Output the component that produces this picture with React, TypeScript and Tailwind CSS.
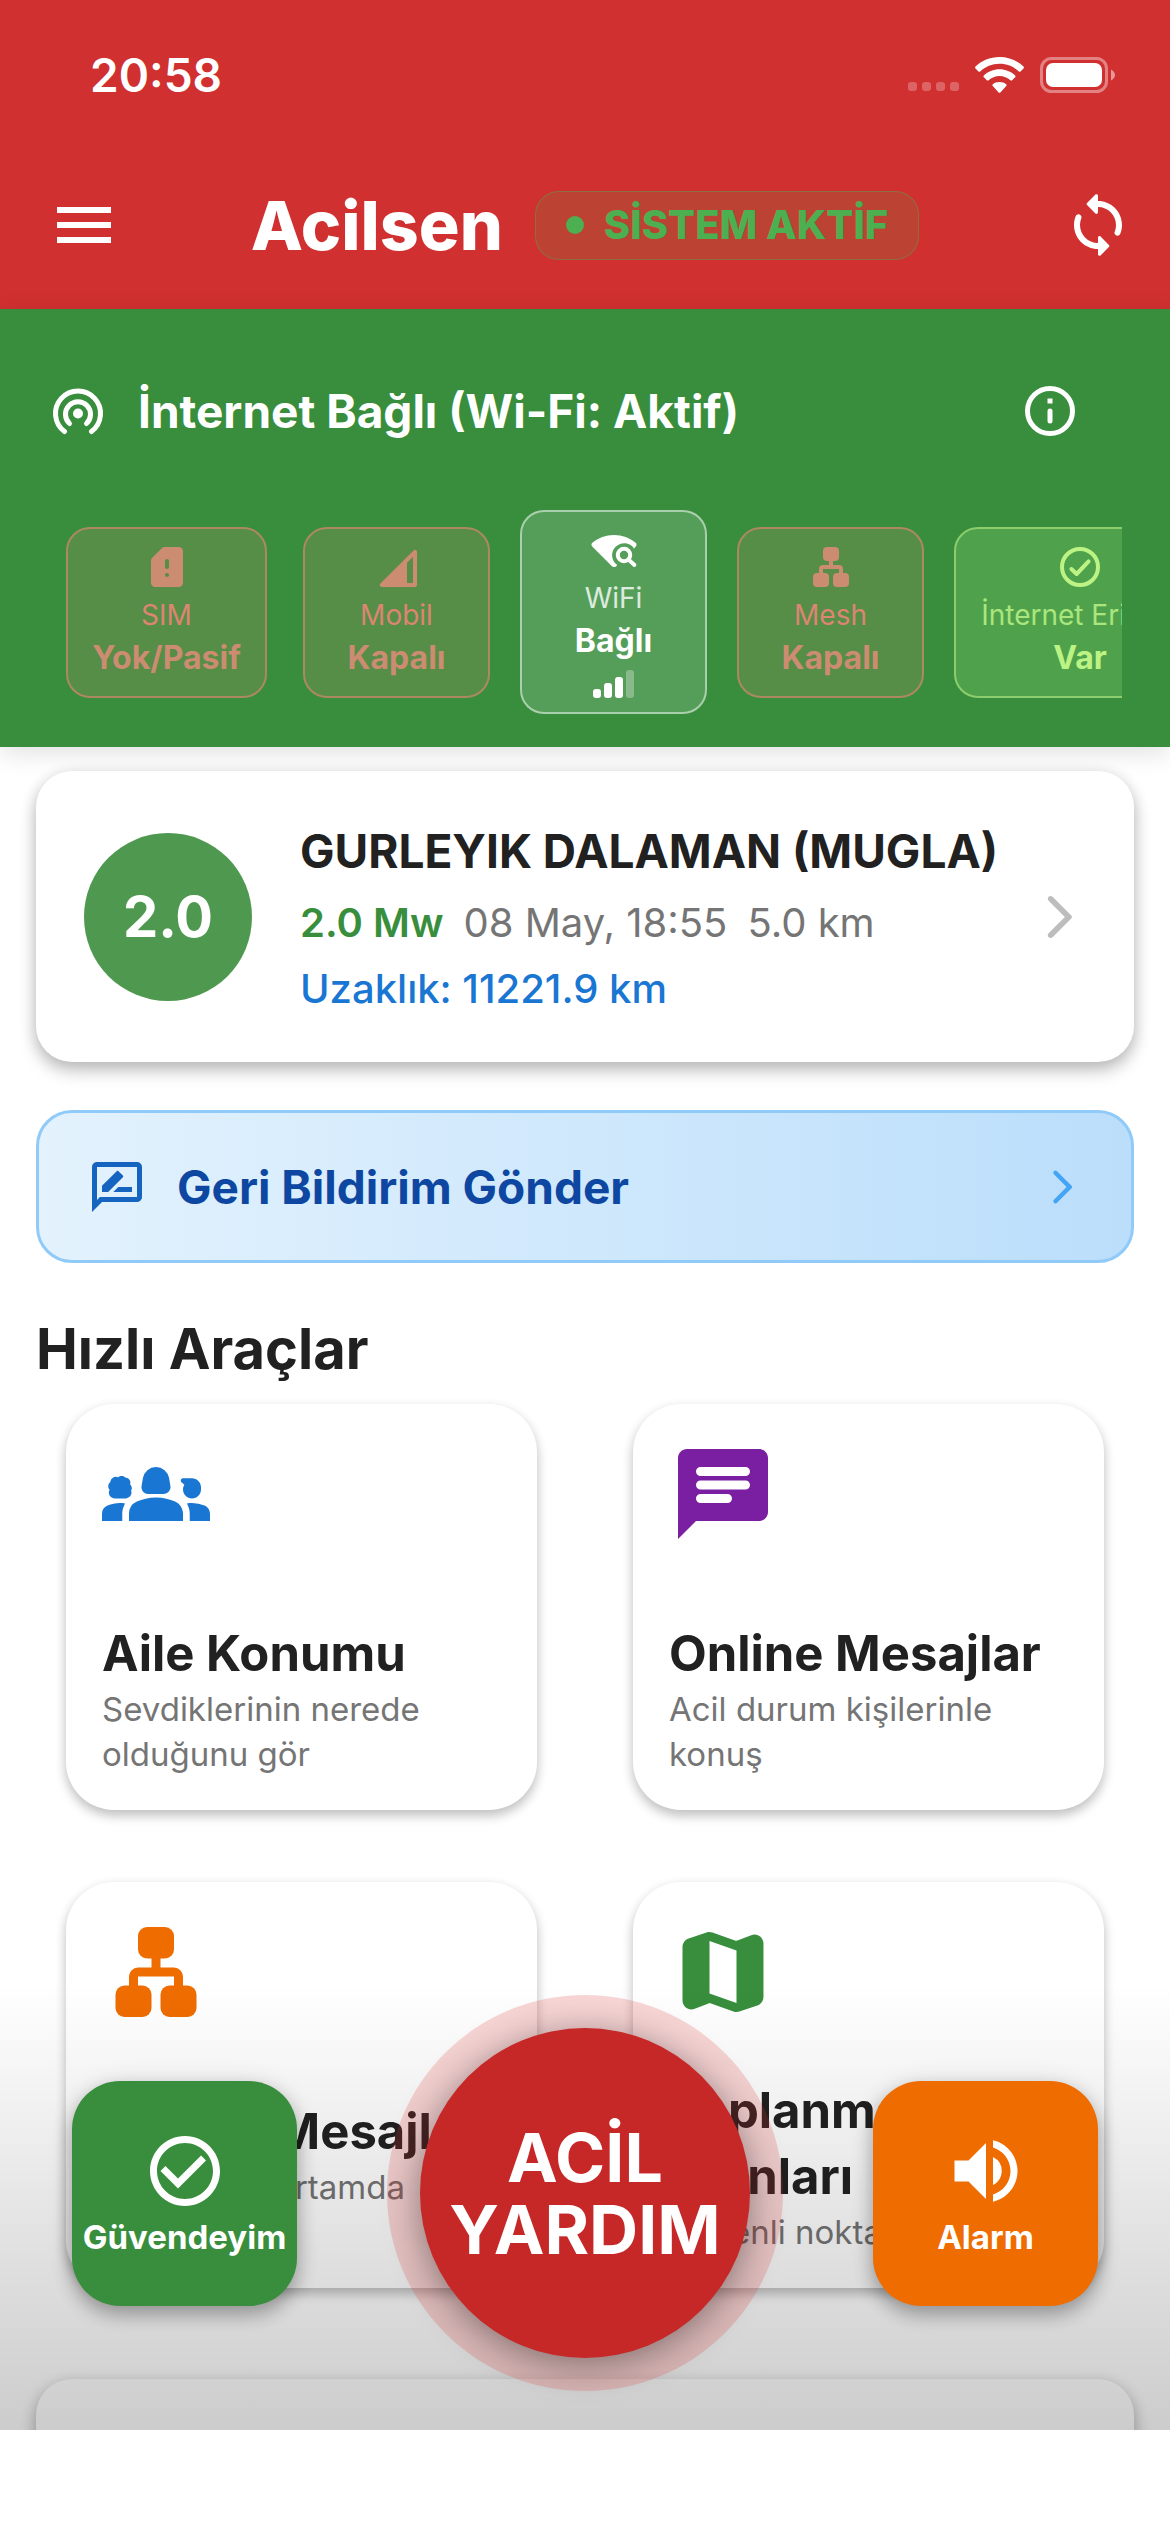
import type { ReactNode } from "react"
import { clsx } from "clsx"
import { MdCheckCircleOutline, MdGroups2, MdMenu, MdOutlineRateReview, MdVolumeUp } from "react-icons/md"

type IconProps = { className?: string }

const makeIcon = (children: ReactNode) =>
    function Icon({ className }: IconProps) {
        return (
            <svg viewBox="0 0 24 24" fill="currentColor" className={className} aria-hidden="true">
                {children}
            </svg>
        )
    }

// Rounded Material glyphs, not shipped with react-icons
const SyncIcon = makeIcon(
    <path d="M12 4V2.21c0-.45-.54-.67-.85-.35l-2.8 2.79c-.2.2-.2.51 0 .71l2.79 2.79c.32.31.86.09.86-.36V6c3.31 0 6 2.69 6 6 0 .79-.15 1.56-.44 2.25-.15.36-.04.77.23 1.04.51.51 1.37.33 1.64-.34.37-.91.57-1.91.57-2.95 0-4.42-3.58-8-8-8zm0 14c-3.31 0-6-2.69-6-6 0-.79.15-1.56.44-2.25.15-.36.04-.77-.23-1.04-.51-.51-1.37-.33-1.64.34C4.2 9.96 4 10.96 4 12c0 4.42 3.58 8 8 8v1.79c0 .45.54.67.85.35l2.79-2.79c.2-.2.2-.51 0-.71l-2.79-2.79c-.31-.31-.85-.09-.85.36V18z" />
)

const TetheringIcon = makeIcon(
    <>
        <circle cx="12" cy="13" r="2" />
        <g fill="none" stroke="currentColor" strokeWidth="2" strokeLinecap="round">
            <path d="M8.6 17A5 5 0 1 1 15.4 17" />
            <path d="M6.6 20.2A9 9 0 1 1 17.4 20.2" />
        </g>
    </>
)

const InfoIcon = makeIcon(
    <>
        <circle cx="12" cy="12" r="9" fill="none" stroke="currentColor" strokeWidth="2" />
        <rect x="11" y="7" width="2" height="2" />
        <rect x="11" y="11" width="2" height="6" rx="1" />
    </>
)

const SimAlertIcon = makeIcon(
    <path
        fillRule="evenodd"
        d="M18 2h-7.17c-.53 0-1.04.21-1.42.59L4.6 7.42c-.37.37-.6.88-.6 1.4V20c0 1.1.9 2 2 2h12c1.1 0 2-.9 2-2V4c0-1.1-.9-2-2-2zm-6 15c-.55 0-1-.45-1-1s.45-1 1-1 1 .45 1 1-.45 1-1 1zm0-4c-.55 0-1-.45-1-1V9c0-.55.45-1 1-1s1 .45 1 1v3c0 .55-.45 1-1 1z"
    />
)

const SignalIcon = makeIcon(
    <path
        fillRule="evenodd"
        d="M4.41 22H21c.55 0 1-.45 1-1V4.41c0-.89-1.08-1.34-1.71-.71L3.71 20.29c-.63.63-.19 1.71.7 1.71zM20 20h-3V9.83l3-3V20z"
    />
)

const WifiFindIcon = makeIcon(
    <>
        <path d="M11 20.1c.7.6 1.5.6 2.1 0l.5-.6A6 6 0 1 1 22 11.2l.9-1c.5-.6.5-1.3-.1-1.8C19.9 6 16.1 4.5 12 4.5S4.1 6 1.2 8.4c-.6.5-.6 1.2-.1 1.8z" />
        <circle cx="17" cy="14.5" r="3.1" fill="none" stroke="currentColor" strokeWidth="2" />
        <path d="M19.3 16.8 22.2 19.5" stroke="currentColor" strokeWidth="2" strokeLinecap="round" />
    </>
)

const LanIcon = makeIcon(
    <>
        <rect x="8" y="2" width="8" height="7" rx="2" />
        <rect x="3" y="15" width="8" height="7" rx="2" />
        <rect x="13" y="15" width="8" height="7" rx="2" />
        <path d="M11 8h2v3h3a2 2 0 0 1 2 2v3h-2v-3H8v3H6v-3a2 2 0 0 1 2-2h3z" />
    </>
)

const CheckCircleIcon = makeIcon(
    <g fill="none" stroke="currentColor" strokeWidth="2" strokeLinecap="round" strokeLinejoin="round">
        <circle cx="12" cy="12" r="9" />
        <path d="M7.7 13 10.3 15.5 16.3 9.2" />
    </g>
)

const ChevronIcon = makeIcon(
    <path d="M7.38 21.01c.49.49 1.28.49 1.77 0l8.31-8.31c.39-.39.39-1.02 0-1.41L9.15 2.98c-.49-.49-1.28-.49-1.77 0s-.49 1.28 0 1.77L14.62 12l-7.25 7.25c-.48.48-.48 1.28.01 1.76z" />
)

const ChatIcon = makeIcon(
    <path
        fillRule="evenodd"
        d="M20 2H4c-1.1 0-2 .9-2 2v18l4-4h14c1.1 0 2-.9 2-2V4c0-1.1-.9-2-2-2zM7 6h10a1 1 0 0 1 0 2H7a1 1 0 0 1 0-2zm0 3h10a1 1 0 0 1 0 2H7a1 1 0 0 1 0-2zm0 3h6a1 1 0 0 1 0 2H7a1 1 0 0 1 0-2z"
    />
)

const MapIcon = makeIcon(
    <path
        fillRule="evenodd"
        d="M14.65 4.98l-5-1.75c-.42-.15-.88-.15-1.3-.01L4.36 4.56C3.55 4.84 3 5.6 3 6.46v11.85c0 1.41 1.41 2.37 2.72 1.86l2.93-1.14c.22-.09.47-.09.69-.01l5 1.75c.42.15.88.15 1.3.01l3.99-1.34c.81-.27 1.36-1.04 1.36-1.9V5.69c0-1.41-1.41-2.37-2.72-1.86l-2.93 1.14c-.22.08-.46.09-.69.01zM15 18.89l-6-2.11V5.11l6 2.11v11.67z"
    />
)

function StatusBar() {
    return (
        <div className="flex h-[141px] items-center justify-between pt-2 pr-[54px] pl-[90px]">
            <span className="text-[46px] leading-[54px] font-semibold">20:58</span>
            <div className="flex items-center gap-4">
                <div className="flex gap-[5px] pt-6">
                    {[0, 1, 2, 3].map((dot) => (
                        <span key={dot} className="h-[9px] w-[9px] rounded-[3px] bg-white/25" />
                    ))}
                </div>
                <svg viewBox="0 0 49 36" className="h-9 w-[49px]" fill="currentColor" aria-hidden="true">
                    <path d="M24.5 0C15 0 6.5 3.7.5 9.6c-.6.6-.6 1.3 0 1.8l3 3c.5.5 1.2.5 1.7 0C10.2 9.6 17 6.7 24.5 6.7s14.3 2.9 19.3 7.7c.5.5 1.2.5 1.7 0l3-3c.6-.5.6-1.2 0-1.8C42.5 3.7 34 0 24.5 0z" />
                    <path d="M24.5 12.3c-6 0-11.5 2.3-15.6 6.1-.6.6-.6 1.3 0 1.9l3 3c.5.5 1.2.5 1.7 0 2.9-2.6 6.7-4.2 10.9-4.2s8 1.6 10.9 4.2c.5.5 1.2.5 1.7 0l3-3c.6-.6.6-1.3 0-1.9-4.1-3.8-9.6-6.1-15.6-6.1z" />
                    <path d="M24.5 25c-2.7 0-5 .9-6.7 2.3-.6.5-.6 1.2 0 1.7l5.8 6.4c.5.6 1.3.6 1.8 0l5.8-6.4c.6-.5.6-1.2 0-1.7-1.7-1.4-4-2.3-6.7-2.3z" />
                </svg>
                <svg viewBox="0 0 76 36" className="h-9 w-[76px]" aria-hidden="true">
                    <rect x="1.5" y="1.5" width="65" height="33" rx="10" fill="none" stroke="white" strokeOpacity=".4" strokeWidth="3" />
                    <rect x="6" y="6" width="56" height="24" rx="7" fill="white" />
                    <path d="M71 12.5c2 .9 4 3 4 5.5s-2 4.6-4 5.5z" fill="white" fillOpacity=".5" />
                </svg>
            </div>
        </div>
    )
}

function AppBar() {
    return (
        <div className="grid h-[168px] grid-cols-[1fr_auto_1fr] items-center pr-9 pl-9">
            <button type="button" aria-label="Menü" className="ml-3 justify-self-start">
                <MdMenu className="h-[72px] w-[72px]" />
            </button>
            <div className="flex items-center gap-8">
                <h1 className="text-[68px] leading-[80px] font-extrabold">Acilsen</h1>
                <div className="flex h-[69px] items-center gap-5 rounded-[24px] border border-[#4caf50]/40 bg-[#4caf50]/15 px-[30px] text-[#4caf50]">
                    <span className="h-[18px] w-[18px] rounded-full bg-[#4caf50]" />
                    <span className="text-[40px] leading-[44px] font-extrabold">SİSTEM AKTİF</span>
                </div>
            </div>
            <button type="button" aria-label="Yenile" className="justify-self-end">
                <SyncIcon className="h-[72px] w-[72px]" />
            </button>
        </div>
    )
}

type Tone = "off" | "active" | "ok"

const chipTone: Record<Tone, string> = {
    off: "border-[#ac895f] bg-[#568d47] text-[#cb8c71]",
    active: "border-white/50 bg-white/15 text-white",
    ok: "border-[#8ecd6d] bg-[#4fa24b] text-[#bcf384]",
}

const labelTone: Record<Tone, string> = {
    off: "text-[#dc8672]",
    active: "text-white/80",
    ok: "text-[#aae67d]",
}

type ChipProps = {
    icon: (props: IconProps) => ReactNode
    label: string
    value: string
    tone: Tone
    className: string
    signal?: boolean
}

function Chip({ icon: Icon, label, value, tone, className, signal }: ChipProps) {
    return (
        <div
            className={clsx(
                "flex shrink-0 flex-col items-center rounded-[24px] border-2 pt-[14px] whitespace-nowrap",
                signal ? "pb-[14px]" : "pb-[19px]",
                chipTone[tone],
                className
            )}
        >
            <Icon className="h-12 w-12" />
            <span className={clsx("mt-[6px] text-[28px] leading-9", labelTone[tone])}>{label}</span>
            <span className="mt-[6px] text-[32px] leading-[38px] font-bold">{value}</span>
            {signal && (
                <div className="mt-[10px] flex h-7 items-end gap-[3px]">
                    <span className="h-[9px] w-2 rounded-[3px] bg-white" />
                    <span className="h-[15px] w-2 rounded-[3px] bg-white" />
                    <span className="h-[21px] w-2 rounded-[3px] bg-white" />
                    <span className="h-7 w-2 rounded-[3px] bg-white/30" />
                </div>
            )}
        </div>
    )
}

function ConnectionPanel() {
    return (
        <section className="h-[438px] bg-[#388e3c] px-12 pt-[66px] text-white shadow-[0_6px_24px_rgba(0,0,0,0.12)]">
            <div className="flex h-[72px] items-center">
                <TetheringIcon className="h-[60px] w-[60px]" />
                <h2 className="ml-[30px] flex-1 text-[46px] leading-[54px] font-bold">İnternet Bağlı (Wi-Fi: Aktif)</h2>
                <button type="button" aria-label="Bilgi" className="mr-[42px]">
                    <InfoIcon className="h-[60px] w-[60px]" />
                </button>
            </div>
            <div className="mt-[63px] flex items-center gap-9 overflow-hidden pl-[18px]">
                <Chip icon={SimAlertIcon} label="SIM" value="Yok/Pasif" tone="off" className="w-[201px]" />
                <div className="flex items-center gap-[30px]">
                    <Chip icon={SignalIcon} label="Mobil" value="Kapalı" tone="off" className="w-[187px]" />
                    <Chip icon={WifiFindIcon} label="WiFi" value="Bağlı" tone="active" className="w-[187px]" signal />
                    <Chip icon={LanIcon} label="Mesh" value="Kapalı" tone="off" className="w-[187px]" />
                    <Chip icon={CheckCircleIcon} label="İnternet Erişimi" value="Var" tone="ok" className="w-[252px]" />
                </div>
            </div>
        </section>
    )
}

function QuakeCard() {
    return (
        <a
            href="#deprem"
            className="flex h-[291px] items-center rounded-[36px] bg-white px-12 shadow-[0_9px_18px_rgba(0,0,0,0.2),0_3px_15px_rgba(0,0,0,0.14)]"
        >
            <span className="flex h-[168px] w-[168px] items-center justify-center rounded-full bg-[#4e994f] text-[56px] font-bold text-white">
                2.0
            </span>
            <div className="ml-12 flex flex-1 flex-col gap-[18px]">
                <h2 className="text-[46px] leading-[60px] font-bold whitespace-nowrap">GURLEYIK DALAMAN (MUGLA)</h2>
                <p className="flex gap-5 text-[40px] leading-[48px] text-[#757575]">
                    <span className="font-semibold text-[#388e3c]">2.0 Mw</span>
                    <span>08 May, 18:55</span>
                    <span>5.0 km</span>
                </p>
                <p className="text-[40px] leading-[48px] font-medium text-[#1976d2]">Uzaklık: 11221.9 km</p>
            </div>
            <ChevronIcon className="h-[54px] w-[54px] text-[#bdbdbd]" />
        </a>
    )
}

function FeedbackButton() {
    return (
        <button
            type="button"
            className="mt-12 flex h-[153px] w-full items-center rounded-[36px] border-[3px] border-[#90caf9] bg-linear-to-r from-[#e3f2fd] to-[#bbdefb] px-12"
        >
            <MdOutlineRateReview className="h-[60px] w-[60px] text-[#1565c0]" />
            <span className="ml-[30px] flex-1 text-left text-[46px] leading-[60px] font-bold text-[#0d47a1]">
                Geri Bildirim Gönder
            </span>
            <ChevronIcon className="h-[42px] w-[42px] text-[#42a5f5]" />
        </button>
    )
}

const tools = [
    { title: "Aile Konumu", description: "Sevdiklerinin nerede olduğunu gör", icon: MdGroups2, color: "text-[#1976d2]" },
    { title: "Online Mesajlar", description: "Acil durum kişilerinle konuş", icon: ChatIcon, color: "text-[#7b1fa2]" },
    { title: "Offline Mesajlar", description: "İnternetsiz ortamda iletişim kur", icon: LanIcon, color: "text-[#ef6c00]" },
    { title: "Toplanma Alanları", description: "Güvenli noktaları bul", icon: MapIcon, color: "text-[#388e3c]" },
]

function QuickTools() {
    return (
        <div className="grid grid-cols-2 gap-x-24 gap-y-[72px] px-[30px]">
            {tools.map(({ title, description, icon: Icon, color }) => (
                <a
                    key={title}
                    href="#araclar"
                    className="flex h-[406px] flex-col justify-between rounded-[48px] bg-white px-9 pt-9 pb-[33px] shadow-[0_6px_12px_rgba(0,0,0,0.2),0_3px_12px_rgba(0,0,0,0.08)]"
                >
                    <Icon className={clsx("h-[108px] w-[108px]", color)} />
                    <div>
                        <h3 className="text-[49px] leading-[66px] font-bold">{title}</h3>
                        <p className="text-[33px] leading-[45px] text-[#757575]">{description}</p>
                    </div>
                </a>
            ))}
        </div>
    )
}

const actionButton =
    "flex h-[225px] w-[225px] flex-col items-center justify-center gap-1 rounded-[48px] text-[33px] leading-10 font-bold shadow-[0_9px_18px_rgba(0,0,0,0.25),0_3px_24px_rgba(0,0,0,0.12)]"

function ActionBar() {
    return (
        <div className="absolute inset-x-0 bottom-0 flex items-center justify-between bg-linear-to-b from-black/0 to-black/20 px-[72px] pt-3 pb-[39px] text-white">
            <button type="button" className={clsx(actionButton, "bg-[#388e3c]")}>
                <MdCheckCircleOutline className="h-[84px] w-[84px]" />
                Güvendeyim
            </button>
            <div className="rounded-full bg-[#e53935]/20 p-[33px]">
                <button
                    type="button"
                    className="h-[330px] w-[330px] rounded-full bg-[#c62828] text-[68px] leading-[72px] font-bold shadow-[0_6px_36px_rgba(0,0,0,0.4)]"
                >
                    ACİL
                    <br />
                    YARDIM
                </button>
            </div>
            <button type="button" className={clsx(actionButton, "bg-[#ef6c00]")}>
                <MdVolumeUp className="h-[84px] w-[84px]" />
                Alarm
            </button>
        </div>
    )
}

export default function App() {
    return (
        <div className="flex h-screen flex-col bg-white font-['Inter',sans-serif] text-[#212121]">
            <header className="shrink-0 bg-[#d03030] text-white">
                <StatusBar />
                <AppBar />
            </header>
            <div className="shrink-0">
                <ConnectionPanel />
            </div>
            <main className="relative min-h-0 flex-1 overflow-hidden">
                <div className="px-9 pt-6">
                    <QuakeCard />
                    <FeedbackButton />
                    <h2 className="mt-12 mb-[17px] text-[56px] leading-[76px] font-bold">Hızlı Araçlar</h2>
                    <QuickTools />
                    <div className="mt-[91px] h-[240px] rounded-[36px] bg-white shadow-[0_9px_18px_rgba(0,0,0,0.2),0_3px_15px_rgba(0,0,0,0.14)]" />
                </div>
                <ActionBar />
            </main>
            {/* home indicator area */}
            <div className="h-[102px] shrink-0" />
        </div>
    )
}
